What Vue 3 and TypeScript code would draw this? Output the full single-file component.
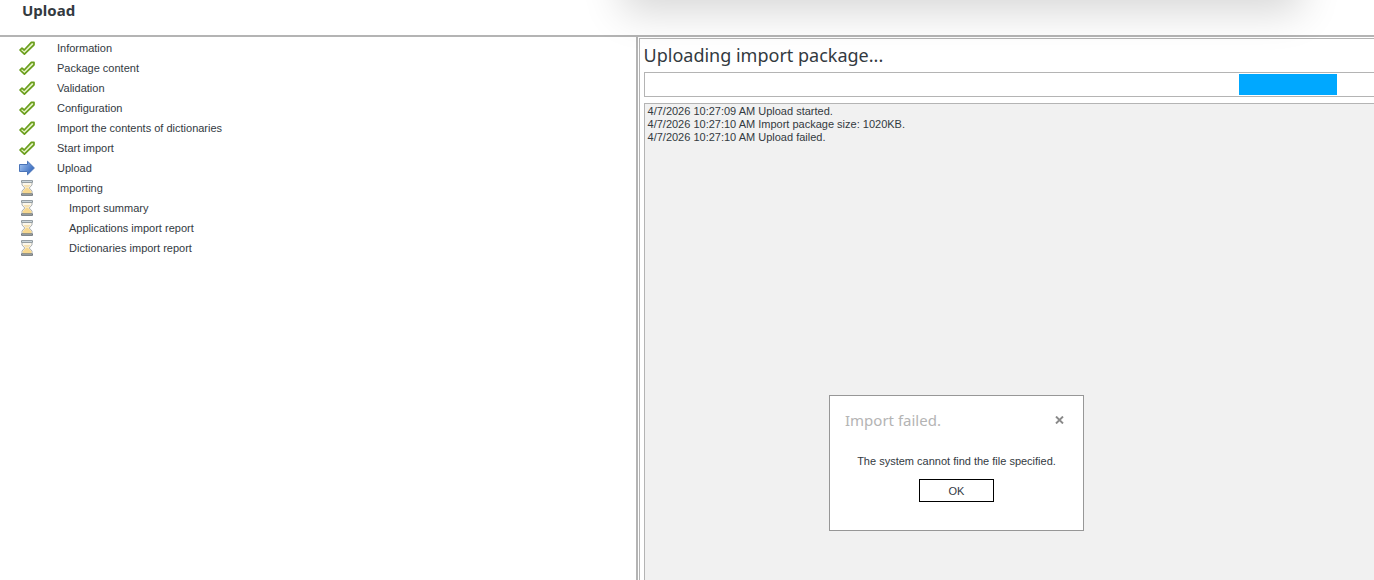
<script setup lang="ts">
type StepState = 'done' | 'current' | 'waiting'

interface Step {
  label: string
  state: StepState
  nested?: boolean
}

const steps: Step[] = [
  { label: 'Information', state: 'done' },
  { label: 'Package content', state: 'done' },
  { label: 'Validation', state: 'done' },
  { label: 'Configuration', state: 'done' },
  { label: 'Import the contents of dictionaries', state: 'done' },
  { label: 'Start import', state: 'done' },
  { label: 'Upload', state: 'current' },
  { label: 'Importing', state: 'waiting' },
  { label: 'Import summary', state: 'waiting', nested: true },
  { label: 'Applications import report', state: 'waiting', nested: true },
  { label: 'Dictionaries import report', state: 'waiting', nested: true },
]

const log: string[] = [
  '4/7/2026 10:27:09 AM Upload started.',
  '4/7/2026 10:27:10 AM Import package size: 1020KB.',
  '4/7/2026 10:27:10 AM Upload failed.',
]

const marquee = { start: 81.5, size: 13.4 }
</script>

<template>
  <div class="page">
    <header class="header">
      <h1>Upload</h1>
    </header>
    <div class="top-shadow" aria-hidden="true"></div>

    <main class="body">
      <nav class="sidebar" aria-label="Import steps">
        <ol class="steps">
          <li
            v-for="step in steps"
            :key="step.label"
            class="step"
            :class="{ nested: step.nested }"
            :aria-current="step.state === 'current' ? 'step' : undefined"
          >
            <svg v-if="step.state === 'done'" class="icon" viewBox="0 0 16 16" aria-hidden="true">
              <path
                d="M1 10 L3 8.1 L5.2 10 L12.4 2.4 L15 2.4 L15 4.8 L5.4 14.2 Z"
                fill="#e6f3c6"
                stroke="#6a9e1c"
                stroke-width="1.7"
                stroke-linejoin="round"
              />
            </svg>
            <svg v-else-if="step.state === 'current'" class="icon" viewBox="0 0 16 16" aria-hidden="true">
              <defs>
                <linearGradient id="arrow-fill" x1="0" y1="0" x2="1" y2="0.6">
                  <stop offset="0" stop-color="#a9c9f3" />
                  <stop offset="1" stop-color="#3568bd" />
                </linearGradient>
              </defs>
              <path
                d="M0.5 4.5 H8.5 V1.2 L15.4 8 L8.5 14.8 V11.5 H0.5 Z"
                fill="url(#arrow-fill)"
                stroke="#4a74b8"
              />
            </svg>
            <svg v-else class="icon" viewBox="0 0 16 16" aria-hidden="true">
              <path
                d="M3 2 H13 V5 L10.2 8 L13 11 V14 H3 V11 L5.8 8 L3 5 Z"
                fill="#fbf6ea"
                stroke="#a3a9ad"
                stroke-width="0.9"
              />
              <path d="M4.4 5 H11.6 L9.4 7.8 H6.6 Z" fill="#f4e1b4" />
              <path d="M6.8 8 H9.2 L12.4 11.3 V14 H3.8 V11.3 Z" fill="#f6d78f" />
              <path d="M2.5 0.6 H13.5 V2.4 H2.5 Z" fill="#d9e4e8" stroke="#8f989c" />
              <path d="M2.5 13.8 H13.5 V15.4 H2.5 Z" fill="#aab0b3" stroke="#767c80" />
            </svg>
            <span>{{ step.label }}</span>
          </li>
        </ol>
      </nav>

      <section class="panel">
        <h2>Uploading import package...</h2>
        <div class="progress" role="progressbar" aria-label="Upload progress">
          <div class="track">
            <div class="chunk" :style="{ marginLeft: marquee.start + '%', width: marquee.size + '%' }"></div>
          </div>
        </div>
        <div class="log" role="log">
          <p v-for="line in log" :key="line">{{ line }}</p>
        </div>
      </section>
    </main>

    <div class="dialog" role="alertdialog" aria-labelledby="dialog-title" aria-describedby="dialog-text">
      <div class="dialog-head">
        <h3 id="dialog-title">Import failed.</h3>
        <button class="close" type="button" aria-label="Close">
          <svg viewBox="0 0 9 8" aria-hidden="true">
            <path d="M1 0.5 L8 7.5 M8 0.5 L1 7.5" stroke="#8a8a8a" stroke-width="1.9" />
          </svg>
        </button>
      </div>
      <p id="dialog-text">The system cannot find the file specified.</p>
      <button class="ok" type="button">OK</button>
    </div>
  </div>
</template>

<style>
html,
body {
  margin: 0;
  background: #fff;
}
</style>

<style scoped>
.page {
  position: relative;
  display: flex;
  flex-direction: column;
  box-sizing: border-box;
  height: 100vh;
  overflow: hidden;
  color: #333a3f;
  font-family: "Liberation Sans", sans-serif;
  font-size: 11px;
  line-height: 13px;
}

h1,
h2,
h3,
p,
ol {
  margin: 0;
  padding: 0;
}

h1,
h2,
h3 {
  font-family: "Noto Sans", sans-serif;
}

.header {
  box-sizing: border-box;
  height: 37px;
  padding-left: 22px;
  border-bottom: 2px solid #b4b4b4;
}

h1 {
  font-size: 15px;
  line-height: 20px;
  font-weight: 700;
}

.top-shadow {
  position: absolute;
  top: -100px;
  left: 45%;
  right: 5%;
  height: 100px;
  box-shadow: 0 16px 40px -4px rgba(0, 0, 0, 0.16);
  pointer-events: none;
}

.body {
  display: flex;
  flex: 1;
  min-height: 0;
}

.sidebar {
  box-sizing: border-box;
  width: 46.4%;
  padding-top: 1px;
  border-right: 2px solid #b4b4b4;
}

.steps {
  list-style: none;
}

.step {
  display: flex;
  align-items: center;
  gap: 22px;
  height: 20px;
  padding-left: 19px;
}

.step.nested {
  gap: 34px;
}

.icon {
  width: 16px;
  height: 16px;
  flex: none;
}

.panel {
  display: flex;
  flex: 1;
  flex-direction: column;
  min-width: 0;
  margin: 1px 0 0 1px;
  padding-left: 4px;
  border: 1px solid #b4b4b4;
  border-width: 1px 0 0 1px;
}

h2 {
  font-size: 18px;
  line-height: 33px;
  font-weight: 400;
}

.progress {
  box-sizing: border-box;
  height: 25px;
  padding: 1px 0;
  border: 1px solid #b4b4b4;
  border-right: 0;
}

.track {
  height: 100%;
}

.chunk {
  height: 100%;
  background: #00a8ff;
}

.log {
  flex: 1;
  margin-top: 6px;
  padding: 1px 3px;
  background: #f1f1f1;
  border: 1px solid #b4b4b4;
  border-width: 1px 0 0 1px;
}

.dialog {
  position: absolute;
  right: 290px;
  bottom: 49px;
  display: flex;
  flex-direction: column;
  align-items: center;
  box-sizing: border-box;
  width: 255px;
  height: 136px;
  padding: 14px 15px;
  background: #fff;
  border: 1px solid #979797;
}

.dialog-head {
  display: flex;
  align-self: stretch;
  align-items: center;
  justify-content: space-between;
}

h3 {
  color: #b4b4b4;
  font-size: 15px;
  line-height: 20px;
  font-weight: 400;
}

.close {
  display: flex;
  padding: 4px;
  background: none;
  border: 0;
}

.close svg {
  width: 9px;
  height: 8px;
}

#dialog-text {
  margin-top: 25px;
}

.ok {
  width: 75px;
  height: 23px;
  margin-top: 11px;
  padding: 1px 0 0;
  color: inherit;
  font: inherit;
  background: #fff;
  border: 1px solid #000;
}
</style>
